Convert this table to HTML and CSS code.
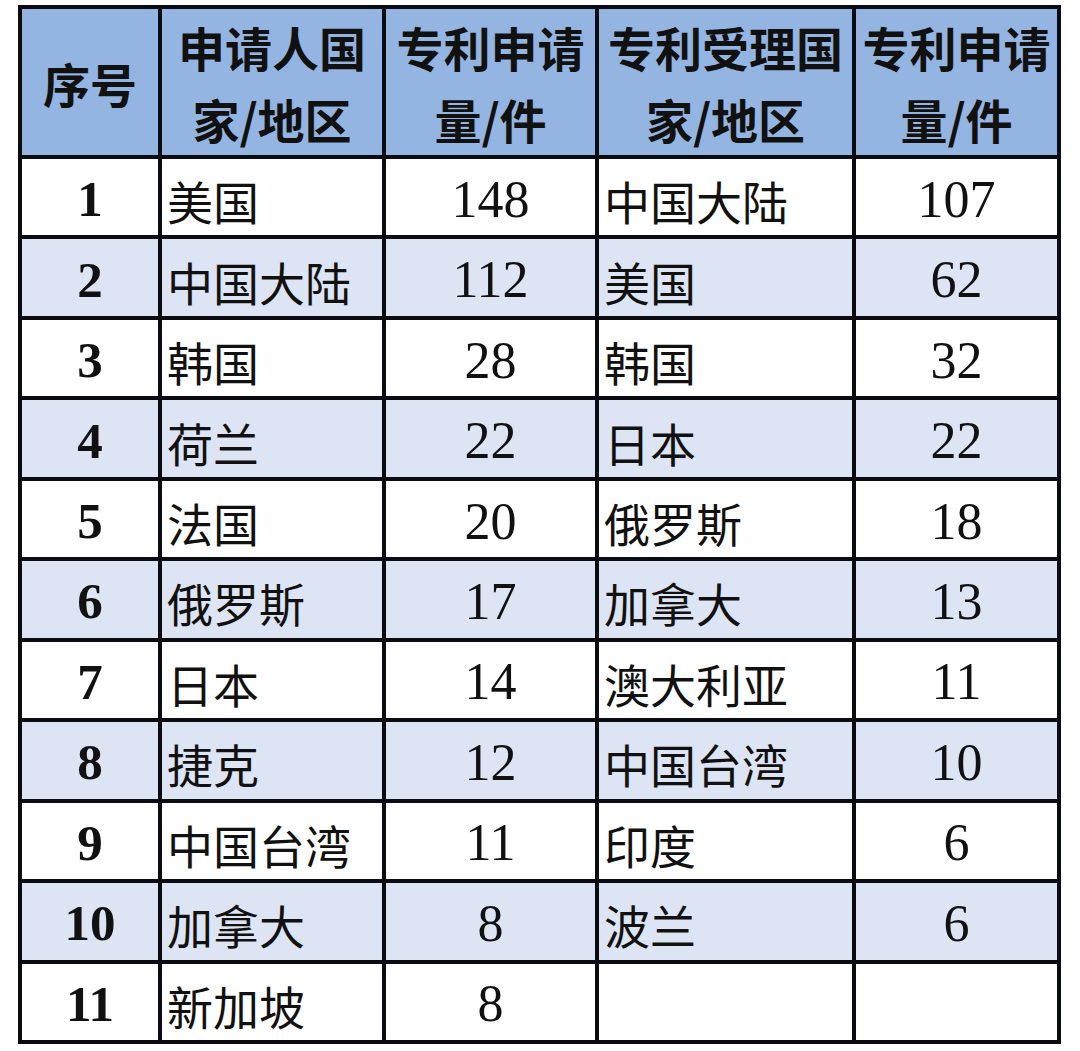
FILE: index.html
```html
<!DOCTYPE html>
<html lang="zh-CN">
<head>
<meta charset="utf-8">
<title>专利申请统计</title>
<link rel="stylesheet" href="styles.css">
</head>
<body>
<div class="sheet">
  <div class="grid">
    <div class="cell head"><span>序号</span></div>
    <div class="cell head"><span>申请人国<br>家/地区</span></div>
    <div class="cell head"><span>专利申请<br>量/件</span></div>
    <div class="cell head"><span>专利受理国<br>家/地区</span></div>
    <div class="cell head"><span>专利申请<br>量/件</span></div>

    <div class="cell idx">1</div><div class="cell name">美国</div><div class="cell num">148</div><div class="cell name">中国大陆</div><div class="cell num">107</div>
    <div class="cell idx alt">2</div><div class="cell name alt">中国大陆</div><div class="cell num alt">112</div><div class="cell name alt">美国</div><div class="cell num alt">62</div>
    <div class="cell idx">3</div><div class="cell name">韩国</div><div class="cell num">28</div><div class="cell name">韩国</div><div class="cell num">32</div>
    <div class="cell idx alt">4</div><div class="cell name alt">荷兰</div><div class="cell num alt">22</div><div class="cell name alt">日本</div><div class="cell num alt">22</div>
    <div class="cell idx">5</div><div class="cell name">法国</div><div class="cell num">20</div><div class="cell name">俄罗斯</div><div class="cell num">18</div>
    <div class="cell idx alt">6</div><div class="cell name alt">俄罗斯</div><div class="cell num alt">17</div><div class="cell name alt">加拿大</div><div class="cell num alt">13</div>
    <div class="cell idx">7</div><div class="cell name">日本</div><div class="cell num">14</div><div class="cell name">澳大利亚</div><div class="cell num">11</div>
    <div class="cell idx alt">8</div><div class="cell name alt">捷克</div><div class="cell num alt">12</div><div class="cell name alt">中国台湾</div><div class="cell num alt">10</div>
    <div class="cell idx">9</div><div class="cell name">中国台湾</div><div class="cell num">11</div><div class="cell name">印度</div><div class="cell num">6</div>
    <div class="cell idx alt">10</div><div class="cell name alt">加拿大</div><div class="cell num alt">8</div><div class="cell name alt">波兰</div><div class="cell num alt">6</div>
    <div class="cell idx">11</div><div class="cell name">新加坡</div><div class="cell num">8</div><div class="cell name"></div><div class="cell num"></div>
  </div>
</div>
</body>
</html>
```

FILE: styles.css
```css
html, body {
  margin: 0;
  padding: 0;
  background: #ffffff;
}

.sheet {
  padding: 5px 0 0 18px;
}

.grid {
  display: grid;
  width: 1043px;
  height: 1039px;
  box-sizing: border-box;
  padding: 4px;
  gap: 4px;
  background: #0b0b12;
  grid-template-columns: 136px 220px 209px 253px 201px;
  grid-template-rows: 146px repeat(11, 1fr);
}

.cell {
  background: #ffffff;
  display: flex;
  align-items: center;
  color: #111111;
  overflow: hidden;
}

.alt {
  background: #dde4f3;
}

.head {
  background: #94b5e1;
  justify-content: center;
  text-align: center;
  font-family: "Noto Sans CJK SC", sans-serif;
  font-weight: 700;
  font-size: 47px;
  line-height: 72px;
  letter-spacing: 0;
  white-space: nowrap;
}

.head span {
  display: block;
  padding-top: 2px;
}

.idx {
  justify-content: center;
  font-family: "Liberation Serif", "Noto Serif", serif;
  font-weight: 700;
  font-size: 51px;
  padding-top: 4px;
}

.name {
  justify-content: flex-start;
  padding-left: 5px;
  padding-top: 6px;
  font-family: "Noto Sans CJK SC", sans-serif;
  font-weight: 400;
  font-size: 46px;
  white-space: nowrap;
}

.num {
  justify-content: center;
  font-family: "Liberation Serif", "Noto Serif", serif;
  font-weight: 400;
  font-size: 52px;
  padding-top: 4px;
}
```
